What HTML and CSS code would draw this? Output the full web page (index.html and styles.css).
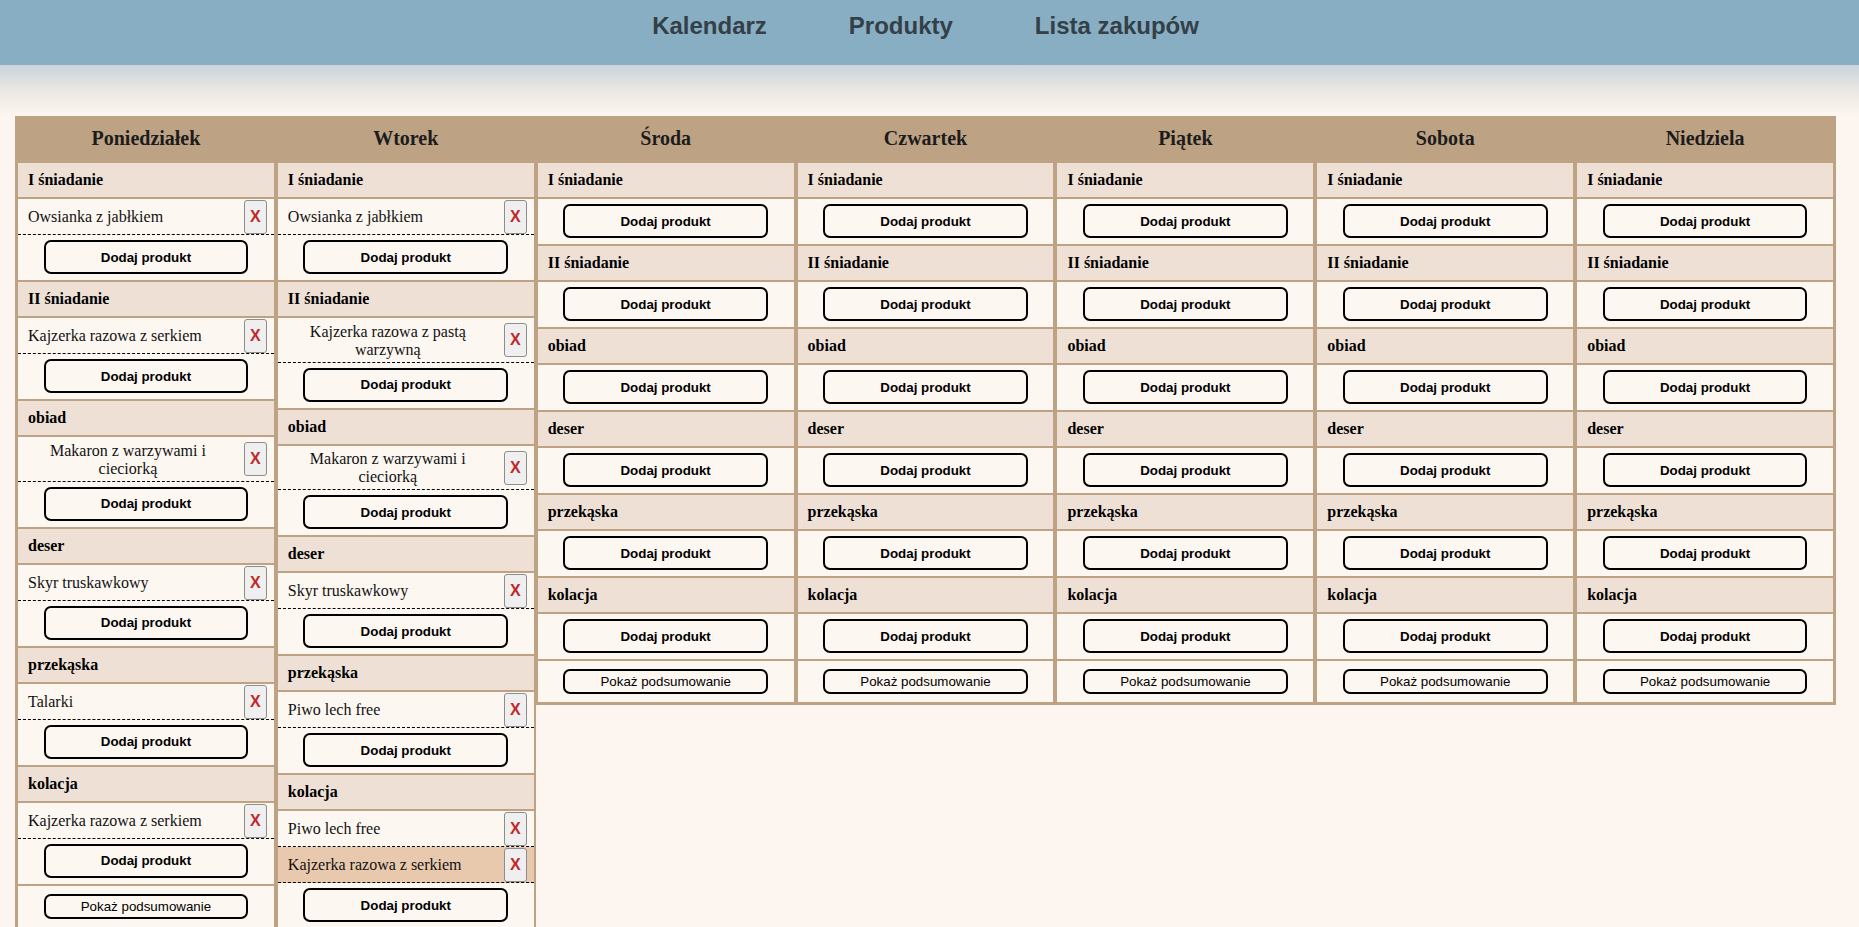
FILE: index.html
```html
<!DOCTYPE html>
<html lang="pl">
<head>
<meta charset="utf-8">
<title>Kalendarz</title>
<link rel="stylesheet" href="styles.css">
</head>
<body>
<header class="topbar">
  <nav class="nav">
    <a class="nav-link" href="#">Kalendarz</a>
    <a class="nav-link" href="#">Produkty</a>
    <a class="nav-link" href="#">Lista zakupów</a>
  </nav>
</header>

<main class="plan">
  <!-- Poniedziałek -->
  <section class="day">
    <div class="day-name">Poniedziałek</div>
    <div class="meal-name">I śniadanie</div>
    <div class="meal-body">
      <div class="item"><p class="item-text">Owsianka z jabłkiem</p><button class="del">X</button></div>
      <div class="add-row"><button class="add-btn">Dodaj produkt</button></div>
    </div>
    <div class="meal-name">II śniadanie</div>
    <div class="meal-body">
      <div class="item"><p class="item-text">Kajzerka razowa z serkiem</p><button class="del">X</button></div>
      <div class="add-row"><button class="add-btn">Dodaj produkt</button></div>
    </div>
    <div class="meal-name">obiad</div>
    <div class="meal-body">
      <div class="item"><p class="item-text">Makaron z warzywami i cieciorką</p><button class="del">X</button></div>
      <div class="add-row"><button class="add-btn">Dodaj produkt</button></div>
    </div>
    <div class="meal-name">deser</div>
    <div class="meal-body">
      <div class="item"><p class="item-text">Skyr truskawkowy</p><button class="del">X</button></div>
      <div class="add-row"><button class="add-btn">Dodaj produkt</button></div>
    </div>
    <div class="meal-name">przekąska</div>
    <div class="meal-body">
      <div class="item"><p class="item-text">Talarki</p><button class="del">X</button></div>
      <div class="add-row"><button class="add-btn">Dodaj produkt</button></div>
    </div>
    <div class="meal-name">kolacja</div>
    <div class="meal-body">
      <div class="item"><p class="item-text">Kajzerka razowa z serkiem</p><button class="del">X</button></div>
      <div class="add-row"><button class="add-btn">Dodaj produkt</button></div>
    </div>
    <div class="summary-row"><button class="summary-btn">Pokaż podsumowanie</button></div>
  </section>

  <!-- Wtorek -->
  <section class="day">
    <div class="day-name">Wtorek</div>
    <div class="meal-name">I śniadanie</div>
    <div class="meal-body">
      <div class="item"><p class="item-text">Owsianka z jabłkiem</p><button class="del">X</button></div>
      <div class="add-row"><button class="add-btn">Dodaj produkt</button></div>
    </div>
    <div class="meal-name">II śniadanie</div>
    <div class="meal-body">
      <div class="item"><p class="item-text">Kajzerka razowa z pastą warzywną</p><button class="del">X</button></div>
      <div class="add-row"><button class="add-btn">Dodaj produkt</button></div>
    </div>
    <div class="meal-name">obiad</div>
    <div class="meal-body">
      <div class="item"><p class="item-text">Makaron z warzywami i cieciorką</p><button class="del">X</button></div>
      <div class="add-row"><button class="add-btn">Dodaj produkt</button></div>
    </div>
    <div class="meal-name">deser</div>
    <div class="meal-body">
      <div class="item"><p class="item-text">Skyr truskawkowy</p><button class="del">X</button></div>
      <div class="add-row"><button class="add-btn">Dodaj produkt</button></div>
    </div>
    <div class="meal-name">przekąska</div>
    <div class="meal-body">
      <div class="item"><p class="item-text">Piwo lech free</p><button class="del">X</button></div>
      <div class="add-row"><button class="add-btn">Dodaj produkt</button></div>
    </div>
    <div class="meal-name">kolacja</div>
    <div class="meal-body">
      <div class="item"><p class="item-text">Piwo lech free</p><button class="del">X</button></div>
      <div class="item item-hover"><p class="item-text">Kajzerka razowa z serkiem</p><button class="del">X</button></div>
      <div class="add-row"><button class="add-btn">Dodaj produkt</button></div>
    </div>
    <div class="summary-row"><button class="summary-btn">Pokaż podsumowanie</button></div>
  </section>

  <!-- Środa -->
  <section class="day">
    <div class="day-name">Środa</div>
    <div class="meal-name">I śniadanie</div>
    <div class="meal-body"><div class="add-row"><button class="add-btn">Dodaj produkt</button></div></div>
    <div class="meal-name">II śniadanie</div>
    <div class="meal-body"><div class="add-row"><button class="add-btn">Dodaj produkt</button></div></div>
    <div class="meal-name">obiad</div>
    <div class="meal-body"><div class="add-row"><button class="add-btn">Dodaj produkt</button></div></div>
    <div class="meal-name">deser</div>
    <div class="meal-body"><div class="add-row"><button class="add-btn">Dodaj produkt</button></div></div>
    <div class="meal-name">przekąska</div>
    <div class="meal-body"><div class="add-row"><button class="add-btn">Dodaj produkt</button></div></div>
    <div class="meal-name">kolacja</div>
    <div class="meal-body"><div class="add-row"><button class="add-btn">Dodaj produkt</button></div></div>
    <div class="summary-row"><button class="summary-btn">Pokaż podsumowanie</button></div>
  </section>

  <!-- Czwartek -->
  <section class="day">
    <div class="day-name">Czwartek</div>
    <div class="meal-name">I śniadanie</div>
    <div class="meal-body"><div class="add-row"><button class="add-btn">Dodaj produkt</button></div></div>
    <div class="meal-name">II śniadanie</div>
    <div class="meal-body"><div class="add-row"><button class="add-btn">Dodaj produkt</button></div></div>
    <div class="meal-name">obiad</div>
    <div class="meal-body"><div class="add-row"><button class="add-btn">Dodaj produkt</button></div></div>
    <div class="meal-name">deser</div>
    <div class="meal-body"><div class="add-row"><button class="add-btn">Dodaj produkt</button></div></div>
    <div class="meal-name">przekąska</div>
    <div class="meal-body"><div class="add-row"><button class="add-btn">Dodaj produkt</button></div></div>
    <div class="meal-name">kolacja</div>
    <div class="meal-body"><div class="add-row"><button class="add-btn">Dodaj produkt</button></div></div>
    <div class="summary-row"><button class="summary-btn">Pokaż podsumowanie</button></div>
  </section>

  <!-- Piątek -->
  <section class="day">
    <div class="day-name">Piątek</div>
    <div class="meal-name">I śniadanie</div>
    <div class="meal-body"><div class="add-row"><button class="add-btn">Dodaj produkt</button></div></div>
    <div class="meal-name">II śniadanie</div>
    <div class="meal-body"><div class="add-row"><button class="add-btn">Dodaj produkt</button></div></div>
    <div class="meal-name">obiad</div>
    <div class="meal-body"><div class="add-row"><button class="add-btn">Dodaj produkt</button></div></div>
    <div class="meal-name">deser</div>
    <div class="meal-body"><div class="add-row"><button class="add-btn">Dodaj produkt</button></div></div>
    <div class="meal-name">przekąska</div>
    <div class="meal-body"><div class="add-row"><button class="add-btn">Dodaj produkt</button></div></div>
    <div class="meal-name">kolacja</div>
    <div class="meal-body"><div class="add-row"><button class="add-btn">Dodaj produkt</button></div></div>
    <div class="summary-row"><button class="summary-btn">Pokaż podsumowanie</button></div>
  </section>

  <!-- Sobota -->
  <section class="day">
    <div class="day-name">Sobota</div>
    <div class="meal-name">I śniadanie</div>
    <div class="meal-body"><div class="add-row"><button class="add-btn">Dodaj produkt</button></div></div>
    <div class="meal-name">II śniadanie</div>
    <div class="meal-body"><div class="add-row"><button class="add-btn">Dodaj produkt</button></div></div>
    <div class="meal-name">obiad</div>
    <div class="meal-body"><div class="add-row"><button class="add-btn">Dodaj produkt</button></div></div>
    <div class="meal-name">deser</div>
    <div class="meal-body"><div class="add-row"><button class="add-btn">Dodaj produkt</button></div></div>
    <div class="meal-name">przekąska</div>
    <div class="meal-body"><div class="add-row"><button class="add-btn">Dodaj produkt</button></div></div>
    <div class="meal-name">kolacja</div>
    <div class="meal-body"><div class="add-row"><button class="add-btn">Dodaj produkt</button></div></div>
    <div class="summary-row"><button class="summary-btn">Pokaż podsumowanie</button></div>
  </section>

  <!-- Niedziela -->
  <section class="day">
    <div class="day-name">Niedziela</div>
    <div class="meal-name">I śniadanie</div>
    <div class="meal-body"><div class="add-row"><button class="add-btn">Dodaj produkt</button></div></div>
    <div class="meal-name">II śniadanie</div>
    <div class="meal-body"><div class="add-row"><button class="add-btn">Dodaj produkt</button></div></div>
    <div class="meal-name">obiad</div>
    <div class="meal-body"><div class="add-row"><button class="add-btn">Dodaj produkt</button></div></div>
    <div class="meal-name">deser</div>
    <div class="meal-body"><div class="add-row"><button class="add-btn">Dodaj produkt</button></div></div>
    <div class="meal-name">przekąska</div>
    <div class="meal-body"><div class="add-row"><button class="add-btn">Dodaj produkt</button></div></div>
    <div class="meal-name">kolacja</div>
    <div class="meal-body"><div class="add-row"><button class="add-btn">Dodaj produkt</button></div></div>
    <div class="summary-row"><button class="summary-btn">Pokaż podsumowanie</button></div>
  </section>
</main>
</body>
</html>
```

FILE: styles.css
```css
html, body {
  margin: 0;
  padding: 0;
}

body {
  background: linear-gradient(#c9d4da, #ece9e4 55%, #fdf6f0) 0 65px / 100% 50px no-repeat, #fdf6f0;
  font-family: "Liberation Serif", "Times New Roman", serif;
  color: #000;
  overflow: hidden;
}

.topbar {
  height: 65px;
  box-sizing: border-box;
  padding-top: 12px;
  background: #88aec4;
}

.nav {
  display: flex;
  justify-content: center;
  gap: 82px;
  padding-right: 8px;
}

.nav-link {
  font-family: "Liberation Sans", Arial, sans-serif;
  font-weight: bold;
  font-size: 24px;
  color: #343f47;
  text-decoration: none;
}

.plan {
  display: flex;
  align-items: flex-start;
  width: 1821px;
  margin: 51px 0 0 15px;
}

.day {
  flex: 1 1 0;
  min-width: 0;
  display: flex;
  flex-direction: column;
  gap: 2px;
  background: #bea284;
  padding: 0 2px 3px;
}

.day:first-child {
  padding-left: 3px;
}

.day:last-child {
  padding-right: 3px;
}

.day-name {
  height: 45px;
  display: flex;
  align-items: center;
  justify-content: center;
  font-weight: bold;
  font-size: 20px;
  color: #1c1c1c;
}

.meal-name {
  height: 34px;
  box-sizing: border-box;
  padding: 0 10px;
  display: flex;
  align-items: center;
  background: #efe0d6;
  font-weight: bold;
  font-size: 16px;
}

.meal-body {
  background: #fdf7f2;
}

.item {
  display: flex;
  align-items: center;
  justify-content: space-between;
  min-height: 34px;
  padding: 1px 7px 0 10px;
  border-bottom: 1px dashed #000;
}

.item-hover {
  background: #e9c9ae;
}

.item-text {
  margin: 0;
  padding: 3.5px 0 3px;
  font-size: 16px;
  text-align: center;
  color: #111;
}

.del {
  flex: 0 0 auto;
  width: 23px;
  height: 34px;
  margin-left: 16px;
  padding: 0;
  background: #efefef;
  border: 1px solid #8d8d8d;
  border-radius: 3px;
  color: #c0292b;
  font-family: "Liberation Sans", Arial, sans-serif;
  font-weight: bold;
  font-size: 16px;
}

.add-row {
  display: flex;
  justify-content: center;
  padding: 5px 0 6px;
}

.add-btn {
  width: 80%;
  height: 34px;
  background: transparent;
  border: 2px solid #000;
  border-radius: 7px;
  font-family: "Liberation Sans", Arial, sans-serif;
  font-weight: bold;
  font-size: 13.333px;
  color: #000;
}

.summary-row {
  display: flex;
  justify-content: center;
  padding: 8px 0;
  background: #fdf7f2;
}

.summary-btn {
  width: 80%;
  height: 25px;
  padding: 0;
  background: transparent;
  border: 2px solid #000;
  border-radius: 7px;
  font-family: "Liberation Sans", Arial, sans-serif;
  font-size: 13.333px;
  color: #000;
}
```
